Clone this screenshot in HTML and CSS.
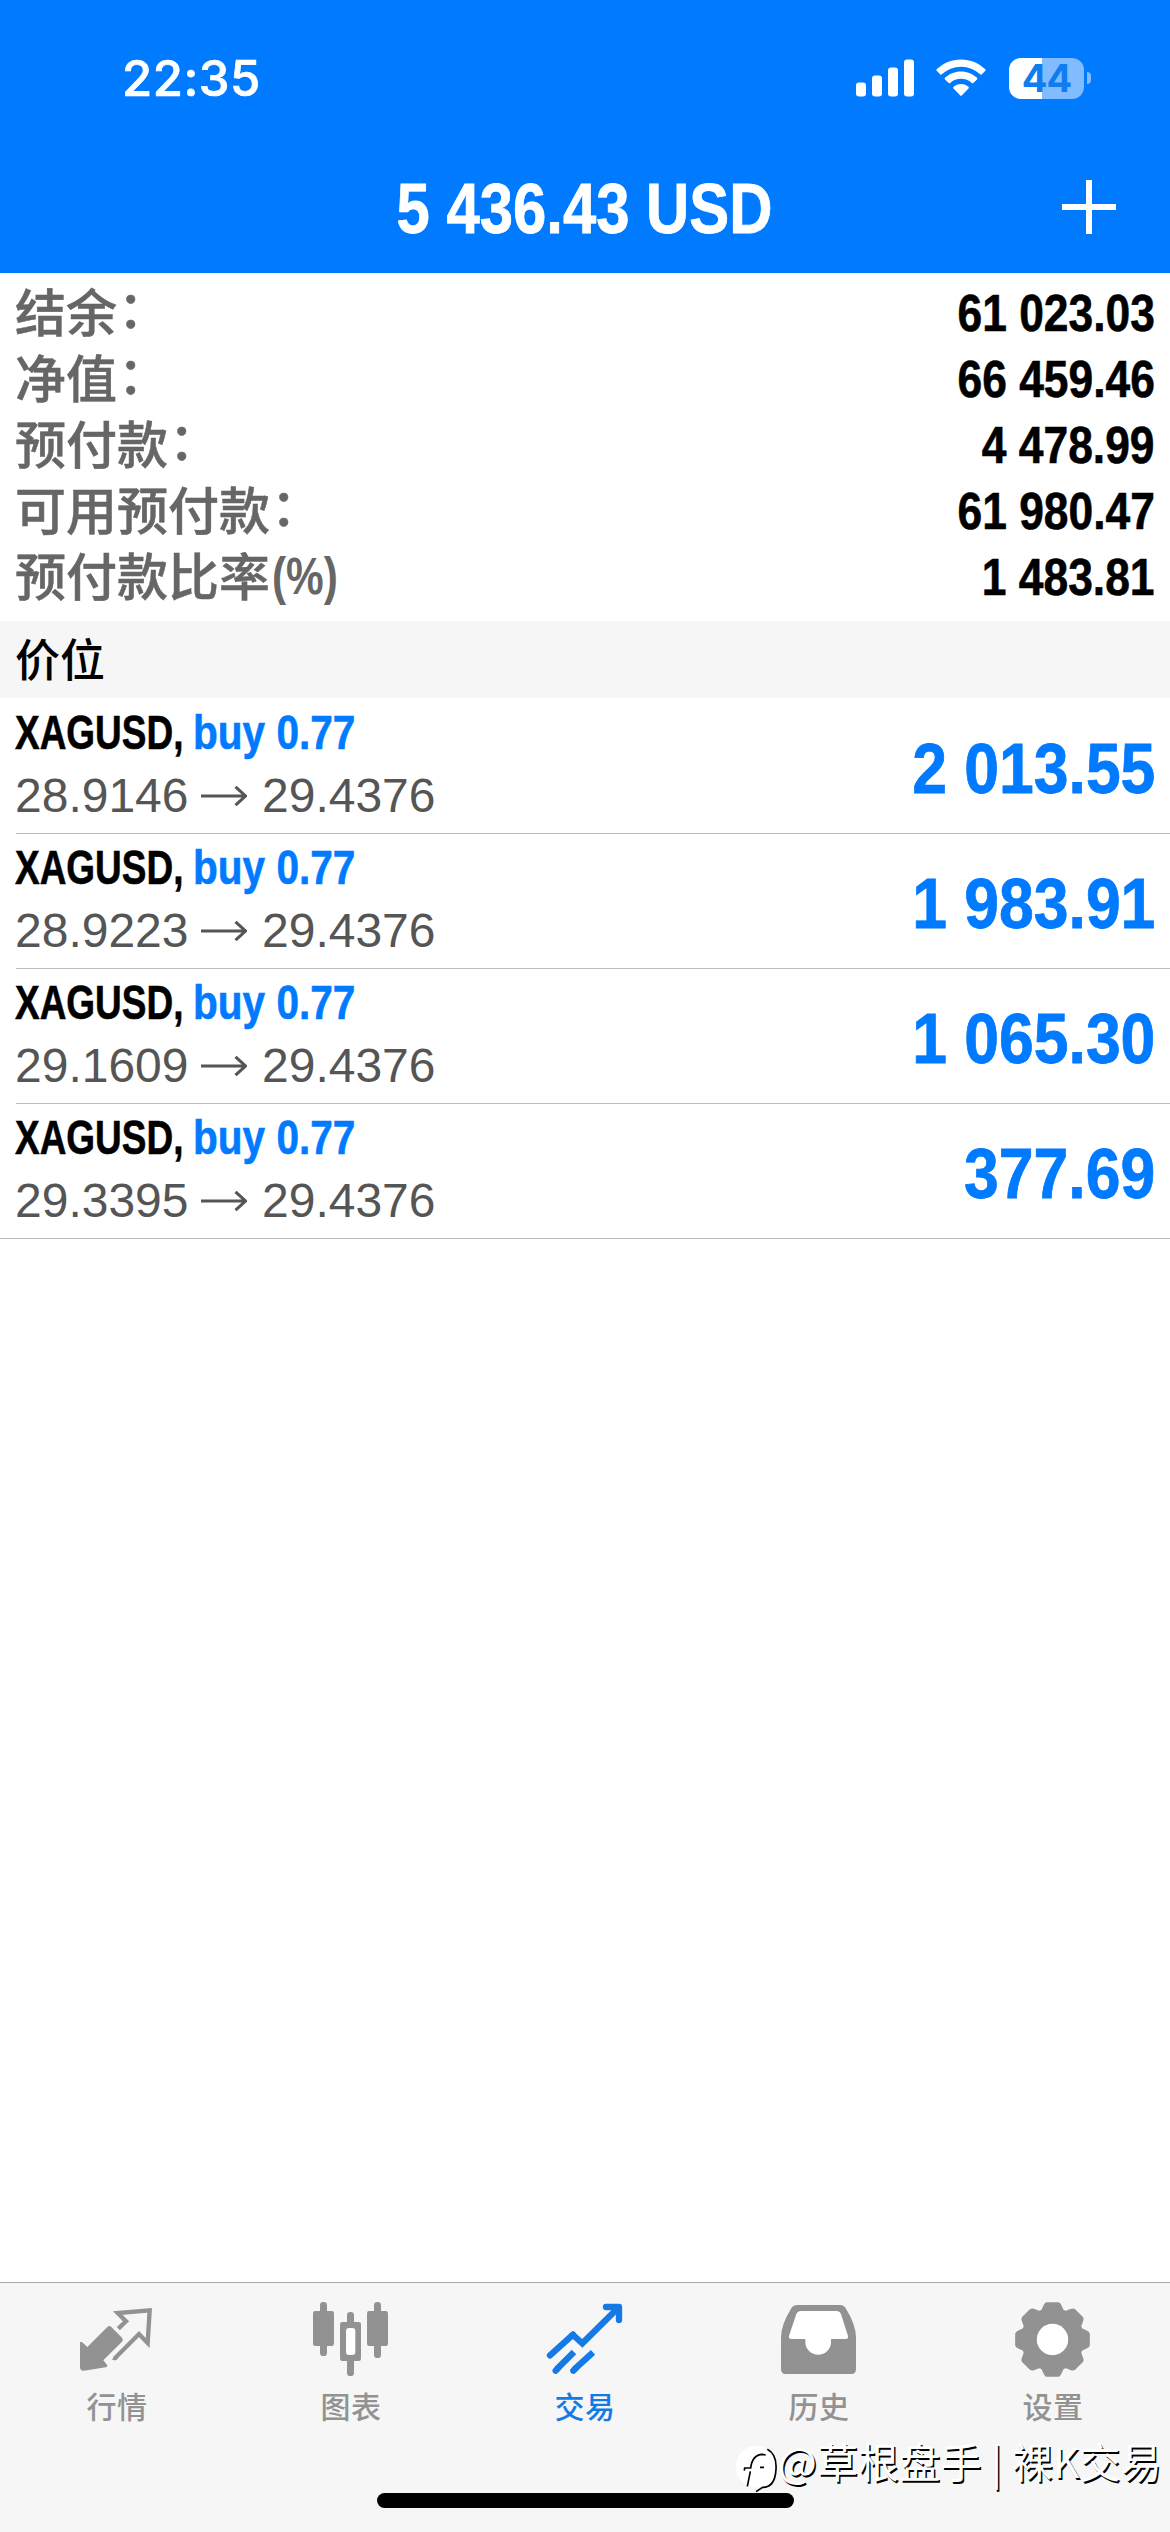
FILE: index.html
```html
<!DOCTYPE html>
<html lang="zh-CN">
<head>
<meta charset="utf-8">
<title>交易</title>
<link rel="stylesheet" href="styles.css">
</head>
<body>
<div class="screen">
  <header class="top">
    <div class="status">
      <span class="clock">22:35</span>
      <span class="indicators">
        <svg class="signal" width="58" height="38" viewBox="0 0 58 38" fill="#fff"><rect x="0" y="23.500" width="10" height="14" rx="3"/><rect x="16" y="16.500" width="10" height="21" rx="3"/><rect x="32" y="8.500" width="10" height="29" rx="3"/><rect x="48" y="0.500" width="10" height="37" rx="3"/></svg>
        <svg class="wifi" width="50" height="38" viewBox="0 0 50 38" fill="#fff"><path d="M25 0.500C34.500 0.500 43 4.200 49.300 10.300Q50 11 49.300 11.800L45.700 15.400Q45 16 44.200 15.300A28 28 0 0 0 5.800 15.300Q5 16 4.300 15.400L.7 11.800Q0 11 .7 10.300C7 4.200 15.500 .5 25 .5z"/><path d="M25 12.500C31.200 12.500 36.800 14.900 41 18.800Q41.800 19.600 41 20.400L37.300 24Q36.600 24.700 35.800 24A16 16 0 0 0 14.200 24Q13.400 24.700 12.700 24L9 20.400Q8.200 19.600 9 18.800C13.200 14.900 18.800 12.500 25 12.500z"/><path d="M25 25C28 25 30.600 26.100 32.500 27.800Q33.200 28.600 32.500 29.400L26 36.300Q25 37.300 24 36.300L17.500 29.400Q16.800 28.600 17.500 27.800C19.400 26.100 22 25 25 25z"/></svg>
        <span class="battery"><span class="cell">44</span><span class="nub"></span></span>
      </span>
    </div>
    <div class="nav">
      <h1 class="total">5 436.43 USD</h1>
      <svg class="plus" width="54" height="54" viewBox="0 0 54 54" stroke="#fff" stroke-width="6"><path d="M0 27H54M27 0V54"/></svg>
    </div>
  </header>

  <section class="account">
    <div class="line"><span class="label">结余<span class="colon">：</span></span><span class="value">61 023.03</span></div>
    <div class="line"><span class="label">净值<span class="colon">：</span></span><span class="value">66 459.46</span></div>
    <div class="line"><span class="label">预付款<span class="colon">：</span></span><span class="value">4 478.99</span></div>
    <div class="line"><span class="label">可用预付款<span class="colon">：</span></span><span class="value">61 980.47</span></div>
    <div class="line"><span class="label">预付款比率<span class="pct">(%)</span></span><span class="value">1 483.81</span></div>
  </section>

  <h2 class="section">价位</h2>

  <main class="positions">
    <div class="position">
      <div class="info">
        <div class="deal"><span class="symbol">XAGUSD,</span><span class="side">buy 0.77</span></div>
        <div class="prices"><span class="open">28.9146</span><svg class="arrow" width="46" height="20" viewBox="0 0 46 20"><path d="M0 10H45M34.500 .8L44.500 10L34.500 19.200"/></svg><span>29.4376</span></div>
      </div>
      <div class="profit">2 013.55</div>
    </div>
    <div class="position">
      <div class="info">
        <div class="deal"><span class="symbol">XAGUSD,</span><span class="side">buy 0.77</span></div>
        <div class="prices"><span class="open">28.9223</span><svg class="arrow" width="46" height="20" viewBox="0 0 46 20"><path d="M0 10H45M34.500 .8L44.500 10L34.500 19.200"/></svg><span>29.4376</span></div>
      </div>
      <div class="profit">1 983.91</div>
    </div>
    <div class="position">
      <div class="info">
        <div class="deal"><span class="symbol">XAGUSD,</span><span class="side">buy 0.77</span></div>
        <div class="prices"><span class="open">29.1609</span><svg class="arrow" width="46" height="20" viewBox="0 0 46 20"><path d="M0 10H45M34.500 .8L44.500 10L34.500 19.200"/></svg><span>29.4376</span></div>
      </div>
      <div class="profit">1 065.30</div>
    </div>
    <div class="position last">
      <div class="info">
        <div class="deal"><span class="symbol">XAGUSD,</span><span class="side">buy 0.77</span></div>
        <div class="prices"><span class="open">29.3395</span><svg class="arrow" width="46" height="20" viewBox="0 0 46 20"><path d="M0 10H45M34.500 .8L44.500 10L34.500 19.200"/></svg><span>29.4376</span></div>
      </div>
      <div class="profit">377.69</div>
    </div>
  </main>

  <nav class="tabs">
    <div class="tab">
      <svg class="icon" viewBox="231 90 240 240"><path fill="currentColor" d="M240 216Q246 215 250 220L262 231L322 171Q328 165 334 171L366 203Q371 209 366 215L310 271L321 284Q324 290 317 292L252 302Q240 303 240 292z"/><path fill="none" stroke="currentColor" stroke-width="13" d="M355 176L378 154L353 129L449 121L443 219L417 192L343 266" stroke-linejoin="miter"/><path fill="currentColor" d="M335 268L350 259L355 263L349 270Q341 272 335 268z"/></svg>
      <span>行情</span>
    </div>
    <div class="tab">
      <svg class="icon" viewBox="933 90 240 240"><g fill="currentColor"><rect x="960" y="96" width="21" height="162" rx="10"/><rect x="939" y="123" width="63" height="105" rx="7"/><rect x="1122" y="96" width="21" height="168" rx="10"/><rect x="1101" y="123" width="63" height="105" rx="7"/><rect x="1041" y="126" width="21" height="192" rx="10"/><rect x="1020" y="156" width="63" height="117" rx="7"/></g><rect x="1038" y="174" width="28" height="81" rx="9" fill="#fff"/></svg>
      <span>图表</span>
    </div>
    <div class="tab active">
      <svg class="icon" viewBox="195 90 240 240" fill="none" stroke="currentColor" stroke-width="19" stroke-linejoin="miter"><path stroke-linecap="round" d="M210 256L279 194"/><path d="M272 200L279 195L307 220L414 114"/><path stroke-linecap="round" stroke-linejoin="round" d="M378 111H417V150"/><path d="M282 246L230 298M339 247L283 298"/><path stroke-linecap="round" d="M227 302L234 295M280 302L287 295"/></svg>
      <span>交易</span>
    </div>
    <div class="tab">
      <svg class="icon" viewBox="237 90 240 240"><path fill="currentColor" d="M292 105H420Q432 105 438 116Q468 165 468 202V298Q468 312 454 312H257Q243 312 243 298V202Q243 165 273 116Q279 105 292 105z"/><path fill="#fff" d="M303 123H409Q419 123 423 132L444 198Q446 207 437 207H393V216A38.500 38.500 0 0 1 316 216V207H274Q265 207 267 198L289 132Q293 123 303 123z"/></svg>
      <span>历史</span>
    </div>
    <div class="tab">
      <svg class="icon" viewBox="939 90 240 240"><defs><path id="tooth" d="M-17 -108H17Q21 -107 23 -101L29 -88Q33 -82 42 -80V-60H-42V-80Q-33 -82 -29 -88L-23 -101Q-21 -107 -17 -108z"/></defs><g transform="translate(1057.500 208.500)" fill="currentColor" stroke="currentColor" stroke-width="8" stroke-linejoin="round"><circle r="66" fill="none" stroke-width="40"/><use href="#tooth"/><use href="#tooth" transform="rotate(45)"/><use href="#tooth" transform="rotate(90)"/><use href="#tooth" transform="rotate(135)"/><use href="#tooth" transform="rotate(180)"/><use href="#tooth" transform="rotate(225)"/><use href="#tooth" transform="rotate(270)"/><use href="#tooth" transform="rotate(315)"/></g><circle cx="1057.500" cy="208.500" r="47" fill="#fff"/></svg>
      <span>设置</span>
    </div>
    <div class="home"></div>
    <div class="watermark">
      <svg width="48" height="52" viewBox="82 522 144 156"><circle cx="150" cy="590" r="63" fill="#fff"/><path fill="none" stroke="#000" stroke-width="5" d="M122 649L131 604M113 602L114 594H132Q137 554 167 553L177 555M182 538Q211 553 208 598Q205 652 168 652L148 665M160 592H172"/></svg>
      <span>@草根盘手 | 裸K交易</span>
    </div>
  </nav>
</div>
</body>
</html>
```
FILE: styles.css
```css
* { box-sizing: border-box; }
body {
  margin: 0;
  background: #fff;
  font-family: "Liberation Sans", "Noto Sans CJK SC", sans-serif;
}
.screen {
  width: 1170px;
  height: 2532px;
  display: flex;
  flex-direction: column;
  overflow: hidden;
}
svg { display: block; flex: none; }

.top {
  height: 273px;
  background: #007aff;
  color: #fff;
}
.status {
  height: 141px;
  padding: 16px 79px 0 122px;
  display: flex;
  justify-content: space-between;
}
.clock {
  font: 500 49px/126px Inter, sans-serif;
  letter-spacing: 0.5px;
  -webkit-text-stroke: 0.7px currentColor;
}
.indicators {
  height: 124px;
  display: flex;
  align-items: center;
}
.wifi { margin-left: 22px; }
.battery {
  margin-left: 23px;
  display: flex;
  align-items: center;
  gap: 3px;
}
.cell {
  width: 75px;
  height: 41px;
  border-radius: 12px;
  background: linear-gradient(to right, #fff 33px, #80bcff 33px);
  color: #0f7cf0;
  font: 700 38px/41px Inter, sans-serif;
  letter-spacing: -1px;
  text-align: center;
}
.nub {
  width: 4px;
  height: 12px;
  border-radius: 0 4px 4px 0;
  background: #80bcff;
}
.nav {
  height: 132px;
  padding: 0 54px 0 107px;
  display: flex;
  align-items: center;
  justify-content: space-between;
}
.total {
  flex: 1;
  margin: 4px 0 0;
  font-size: 71px;
  line-height: 132px;
  text-align: center;
  white-space: nowrap;
  transform: scaleX(0.843);
  -webkit-text-stroke: 0.8px currentColor;
}

.account {
  height: 348px;
  padding: 7px 15px 0;
}
.line {
  height: 66px;
  display: flex;
  justify-content: space-between;
  white-space: nowrap;
}
.label {
  color: #666;
  font-weight: 500;
  font-size: 51px;
  line-height: 70px;
  -webkit-text-stroke: 0.5px currentColor;
}
.colon {
  display: inline-block;
  line-height: 60px;
  transform: translate(1px, -4px);
}
.pct {
  display: inline-block;
  font-weight: 700;
  line-height: 60px;
  transform: translate(2px, -2px) scaleX(0.83);
  transform-origin: left;
  -webkit-text-stroke: 0;
}
.value {
  font-weight: 700;
  font-size: 51px;
  line-height: 67px;
  transform: scaleX(0.87);
  transform-origin: right;
  -webkit-text-stroke: 0.6px currentColor;
}

.section {
  height: 77px;
  margin: 0;
  padding-left: 15px;
  background: #f6f6f6;
  font: 500 45px/73px "Noto Sans CJK SC", sans-serif;
}

.positions { flex: 1; padding-top: 1px; }
.position {
  height: 135px;
  margin-left: 16px;
  padding: 4px 15px 0 0;
  border-bottom: 1px solid #bdbdbf;
  display: flex;
  justify-content: space-between;
  white-space: nowrap;
}
.position.last {
  margin-left: 0;
  padding-left: 16px;
}
.deal {
  display: flex;
  height: 60px;
  font-weight: 700;
  font-size: 48px;
  line-height: 60px;
  -webkit-text-stroke: 0.6px currentColor;
}
.symbol {
  width: 177px;
  transform: translateX(-1px) scaleX(0.77);
  transform-origin: left;
}
.side {
  color: #007aff;
  transform: scaleX(0.845);
  transform-origin: left;
}
.prices {
  display: flex;
  height: 66px;
  align-items: center;
  color: #555;
  font-size: 48px;
  line-height: 66px;
}
.open { width: 186px; margin-left: -1px; }
.arrow {
  margin-right: 15px;
  fill: none;
  stroke: #555;
  stroke-width: 3;
}
.profit {
  color: #007aff;
  font-weight: 700;
  font-size: 71px;
  line-height: 131px;
  transform: scaleX(0.88);
  transform-origin: right;
  -webkit-text-stroke: 0.8px currentColor;
}

.tabs {
  position: relative;
  height: 250px;
  padding-top: 17px;
  border-top: 1px solid #a9a9ab;
  background: #f6f6f6;
  display: flex;
}
.tab {
  flex: 1;
  display: flex;
  flex-direction: column;
  align-items: center;
  color: #929292;
  font: 500 30px/44px "Noto Sans CJK SC", sans-serif;
  letter-spacing: 0.5px;
}
.tab span { margin-top: 3px; }
.tab.active { color: #147ae6; }
.icon { width: 80px; height: 80px; }
.home {
  position: absolute;
  left: 377px;
  bottom: 24px;
  width: 417px;
  height: 15px;
  border-radius: 8px;
  background: #000;
}
.watermark {
  position: absolute;
  right: 8px;
  bottom: 36px;
  display: flex;
  align-items: center;
  color: #fff;
  font: 400 41px/52px "Noto Sans CJK SC", sans-serif;
  text-shadow: 1.5px 1.5px 0 #000;
  white-space: nowrap;
}
.watermark span {
  margin: -20px 0 0 -4px;
  letter-spacing: 0.2px;
}
```
